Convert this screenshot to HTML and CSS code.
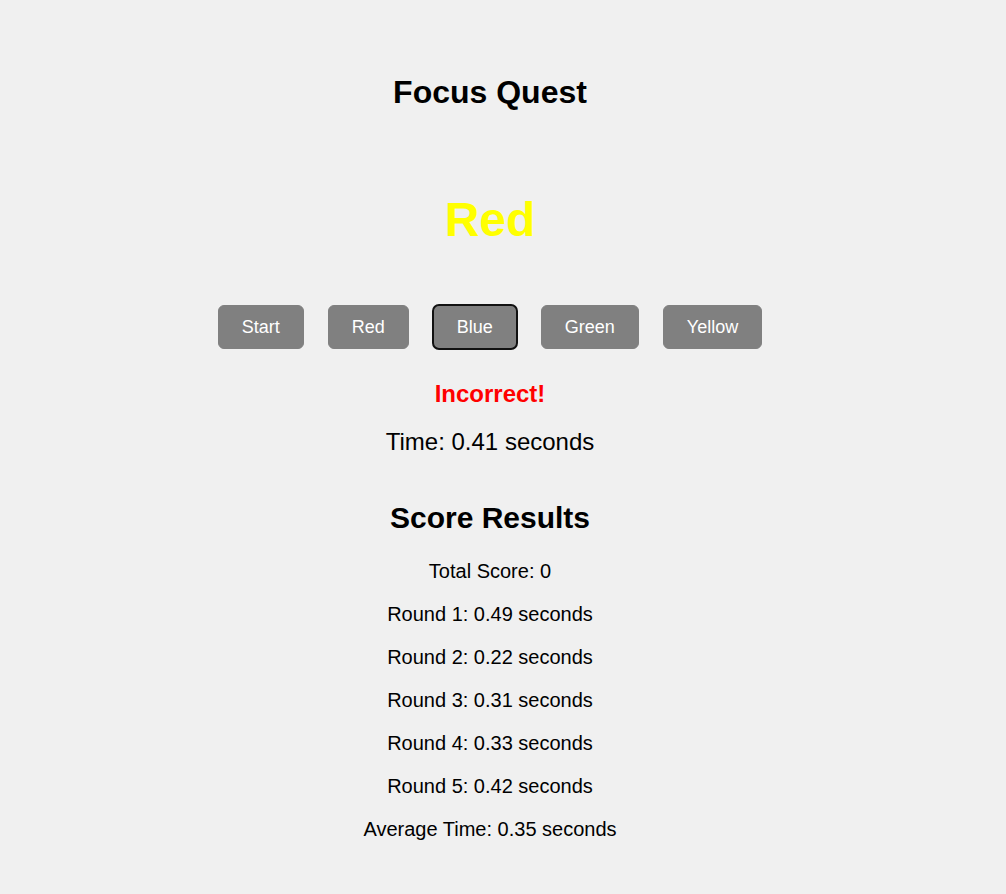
FILE: index.html
```html
<!DOCTYPE html>
<html lang="en">
<head>
<meta charset="utf-8">
<title>Focus Quest</title>
<link rel="stylesheet" href="styles.css">
</head>
<body>
<div class="app">
  <h1 class="title">Focus Quest</h1>
  <div class="word">Red</div>
  <div class="buttons">
    <button class="btn">Start</button>
    <button class="btn">Red</button>
    <button class="btn focused">Blue</button>
    <button class="btn">Green</button>
    <button class="btn">Yellow</button>
  </div>
  <div class="feedback">Incorrect!</div>
  <div class="time">Time: 0.41 seconds</div>
  <h2 class="results-title">Score Results</h2>
  <div class="results">
    <p class="row">Total Score: 0</p>
    <p class="row">Round 1: 0.49 seconds</p>
    <p class="row">Round 2: 0.22 seconds</p>
    <p class="row">Round 3: 0.31 seconds</p>
    <p class="row">Round 4: 0.33 seconds</p>
    <p class="row">Round 5: 0.42 seconds</p>
    <p class="row">Average Time: 0.35 seconds</p>
  </div>
</div>
</body>
</html>
```

FILE: styles.css
```css
html, body {
  margin: 0;
  padding: 0;
  background: #f0f0f0;
}
body {
  font-family: "Liberation Sans", Arial, sans-serif;
  color: #000;
}
.app {
  width: 980px;
  padding-top: 74px;
  display: flex;
  flex-direction: column;
  align-items: center;
  text-align: center;
}
.title {
  margin: 0;
  font-size: 32px;
  line-height: 37px;
  font-weight: bold;
}
.word {
  margin-top: 81px;
  font-size: 48px;
  line-height: 55px;
  font-weight: bold;
  color: #ffff00;
}
.buttons {
  margin-top: 58px;
  display: flex;
  gap: 24px;
}
.btn {
  font-family: "Liberation Sans", Arial, sans-serif;
  font-size: 18px;
  line-height: 18px;
  padding: 12px 23px;
  border: 1px solid #808080;
  border-radius: 6px;
  background: #808080;
  color: #fff;
}
.btn.focused {
  outline: 2px solid #111;
  outline-offset: -1px;
}
.feedback {
  margin-top: 31px;
  font-size: 24px;
  line-height: 28px;
  font-weight: bold;
  color: #ff0000;
}
.time {
  margin-top: 20px;
  font-size: 24px;
  line-height: 28px;
}
.results-title {
  margin: 44px 0 0;
  font-size: 30px;
  line-height: 35px;
  font-weight: bold;
}
.results {
  margin-top: 25px;
  display: flex;
  flex-direction: column;
  gap: 20px;
}
.row {
  margin: 0;
  font-size: 20px;
  line-height: 23px;
}
```
